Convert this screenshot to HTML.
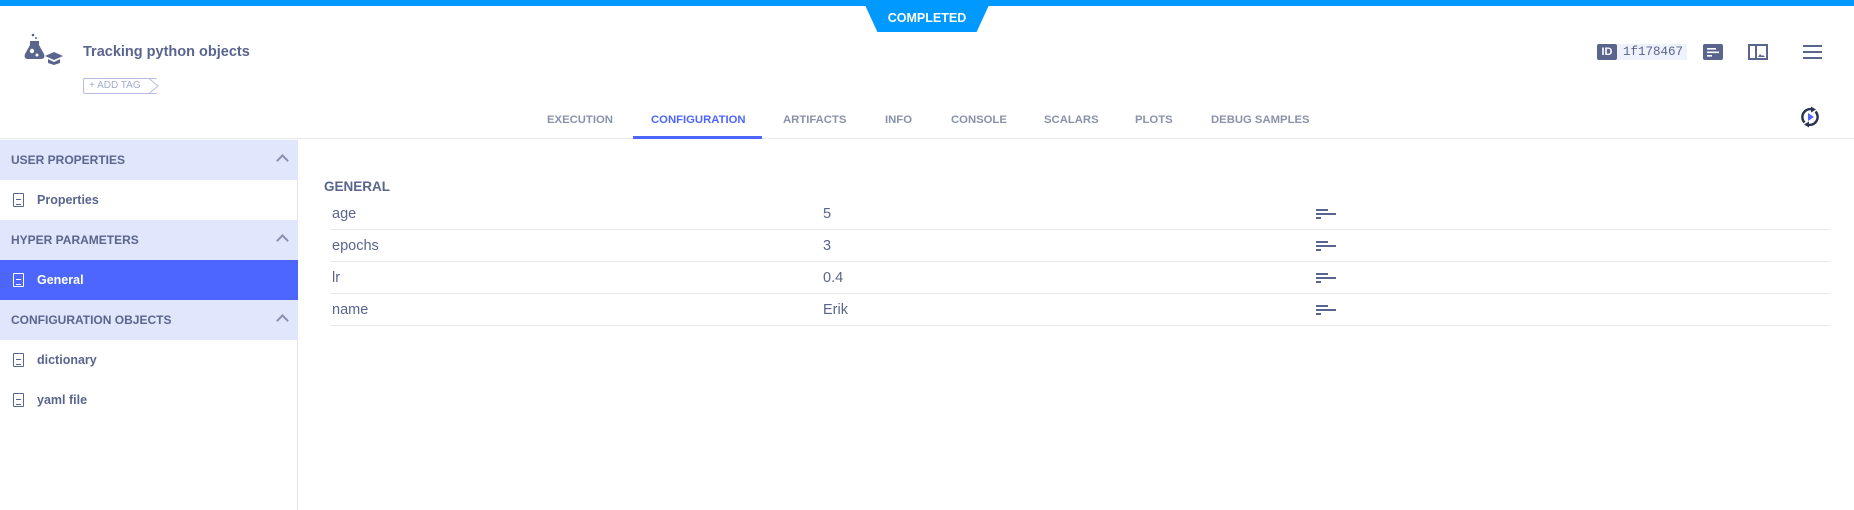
<!DOCTYPE html>
<html><head><meta charset="utf-8"><style>
*{margin:0;padding:0;box-sizing:border-box}
body{width:1854px;height:510px;background:#fff;font-family:"Liberation Sans",Arial,sans-serif;position:relative;overflow:hidden;color:#5a658e}
.abs{position:absolute}
.topbar{left:0;top:0;width:1854px;height:6px;background:#0099ff}
.status{left:865px;top:5px;width:124px;height:27px;background:#0099ff;clip-path:polygon(0 0,100% 0,90% 100%,10% 100%);color:#fff;font-size:12.5px;font-weight:bold;text-align:center;line-height:26px}
.title{left:83px;top:44px;font-size:14.5px;font-weight:bold;color:#5a658e}
.addtag{left:83px;top:78px;width:74px;height:16px;border:1px solid #b5bde0;border-right:none;border-radius:2px;font-size:10px;color:#a3acd0;line-height:14px;padding-left:5px}
.tab{top:114px;font-size:11.3px;font-weight:bold;color:#8a92aa}
.hline{left:0;top:138px;width:1854px;height:1px;background:#e6e8f0}
.side{left:0;top:139px;width:298px;height:371px;border-right:1px solid #e0e3ee}
.sh{position:absolute;left:0;width:298px;height:40px;background:#e0e6fb;font-size:12px;font-weight:bold;line-height:40px;padding-left:11px;color:#5a658e}
.si{position:absolute;left:0;width:298px;height:40px;font-size:12.5px;font-weight:bold;line-height:40px;padding-left:37px;color:#5a658e}
.chev{position:absolute;right:11px;top:16px;width:9px;height:9px;border-left:2px solid #8890b0;border-top:2px solid #8890b0;transform:rotate(45deg)}
.doc{position:absolute;left:13px;top:13px;width:11px;height:14px;border:1.8px solid currentColor;border-radius:1px}
.doc:after{content:"";position:absolute;left:2px;top:5px;width:5px;height:4px;border-top:1.5px solid currentColor;border-bottom:1.5px solid currentColor}
.row{position:absolute;left:331px;width:1499px;height:32px;border-bottom:1px solid #e8eaf2;font-size:14.5px;line-height:32px;color:#5a658e}
.row .k{position:absolute;left:1px}
.row .v{position:absolute;left:492px}
.ic{position:absolute;left:985px;top:11px}
.ic i{display:block;height:2px;background:#5a658e;margin-bottom:2px}
</style></head><body>
<div class="abs topbar"></div>
<div class="abs status">COMPLETED</div>
<svg class="abs" style="left:24px;top:33px" width="42" height="34" viewBox="0 0 42 34">
<circle cx="9" cy="2" r="1.3" fill="#5a658e"/><circle cx="12" cy="5" r="1" fill="#5a658e"/>
<path d="M6 8h9v4l5 9c1 3 0 5-3 5H4c-3 0-4-2-3-5l5-9z" fill="#5a658e"/>
<circle cx="8" cy="18" r="2.2" fill="#fff"/><circle cx="13" cy="22" r="1.5" fill="#fff"/>
<path d="M21 23l9-4 9 4-9 4z" fill="#5a658e"/><path d="M24 26v4l6 2 6-2v-4l-6 3z" fill="#5a658e"/>
</svg>
<div class="abs title">Tracking python objects</div>
<div class="abs addtag">+ ADD TAG</div>
<svg class="abs" style="left:149px;top:78px" width="10" height="16"><path d="M0 0.5L9 8L0 15.5" fill="none" stroke="#b5bde0"/></svg>
<div class="abs" style="left:1597px;top:44px;width:20px;height:16px;background:#5a658e;border-radius:2px;color:#fff;font-size:11px;font-weight:bold;text-align:center;line-height:16px">ID</div>
<div class="abs" style="left:1617px;top:44px;width:70px;height:16px;background:#eef2fc;font-family:'Liberation Mono',monospace;font-size:12.5px;line-height:16px;padding-left:6px;color:#5a658e">1f178467</div>
<svg class="abs" style="left:1703px;top:44px" width="20" height="16"><rect width="20" height="16" rx="2" fill="#5a658e"/><rect x="4" y="4" width="9" height="1.6" fill="#fff"/><rect x="4" y="7.5" width="12" height="1.6" fill="#fff"/><rect x="4" y="11" width="5" height="1.6" fill="#fff"/></svg>
<svg class="abs" style="left:1748px;top:44px" width="20" height="16"><rect x="1" y="1" width="18" height="14" fill="none" stroke="#5a658e" stroke-width="2"/><rect x="7" y="1" width="2" height="14" fill="#5a658e"/><path d="M10 13l2-3 2 2 1-1 2 2z" fill="#5a658e"/></svg>
<svg class="abs" style="left:1803px;top:45px" width="19" height="14"><rect y="0" width="19" height="2" fill="#5a658e"/><rect y="6" width="19" height="2" fill="#5a658e"/><rect y="12" width="19" height="2" fill="#5a658e"/></svg>
<div class="abs tab" style="left:547px">EXECUTION</div>
<div class="abs tab" style="left:651px;color:#4d66ff">CONFIGURATION</div>
<div class="abs tab" style="left:783px">ARTIFACTS</div>
<div class="abs tab" style="left:885px">INFO</div>
<div class="abs tab" style="left:951px">CONSOLE</div>
<div class="abs tab" style="left:1044px">SCALARS</div>
<div class="abs tab" style="left:1135px">PLOTS</div>
<div class="abs tab" style="left:1211px">DEBUG SAMPLES</div>
<div class="abs hline"></div>
<div class="abs" style="left:633px;top:136px;width:129px;height:3px;background:#4d66ff"></div>
<svg class="abs" style="left:1799px;top:106px" width="22" height="22" viewBox="0 0 22 22"><path d="M5.5 16.5A8 8 0 0 1 14 3.5" fill="none" stroke="#2a3350" stroke-width="2.4"/><path d="M16.5 5.5A8 8 0 0 1 8 18.5" fill="none" stroke="#2a3350" stroke-width="2.4"/><path d="M12 0.5l5 3-5 3z" fill="#2a3350"/><path d="M10 21.5l-5-3 5-3z" fill="#2a3350"/><path d="M9 7l6 4-6 4z" fill="#4d66ff"/></svg>
<div class="abs side">
<div class="sh" style="top:1px">USER PROPERTIES<span class="chev"></span></div>
<div class="si" style="top:41px"><span class="doc"></span>Properties</div>
<div class="sh" style="top:81px">HYPER PARAMETERS<span class="chev"></span></div>
<div class="si" style="top:121px;background:#4d66ff;color:#fff"><span class="doc"></span>General</div>
<div class="sh" style="top:161px">CONFIGURATION OBJECTS<span class="chev"></span></div>
<div class="si" style="top:201px"><span class="doc"></span>dictionary</div>
<div class="si" style="top:241px"><span class="doc"></span>yaml file</div>
</div>
<div class="abs" style="left:324px;top:179px;font-size:13.5px;font-weight:bold;color:#5a658e">GENERAL</div>
<div class="row" style="top:198px"><span class="k">age</span><span class="v">5</span><span class="ic"><i style="width:12px"></i><i style="width:20px"></i><i style="width:5px"></i></span></div>
<div class="row" style="top:230px"><span class="k">epochs</span><span class="v">3</span><span class="ic"><i style="width:12px"></i><i style="width:20px"></i><i style="width:5px"></i></span></div>
<div class="row" style="top:262px"><span class="k">lr</span><span class="v">0.4</span><span class="ic"><i style="width:12px"></i><i style="width:20px"></i><i style="width:5px"></i></span></div>
<div class="row" style="top:294px"><span class="k">name</span><span class="v">Erik</span><span class="ic"><i style="width:12px"></i><i style="width:20px"></i><i style="width:5px"></i></span></div>
</body></html>
